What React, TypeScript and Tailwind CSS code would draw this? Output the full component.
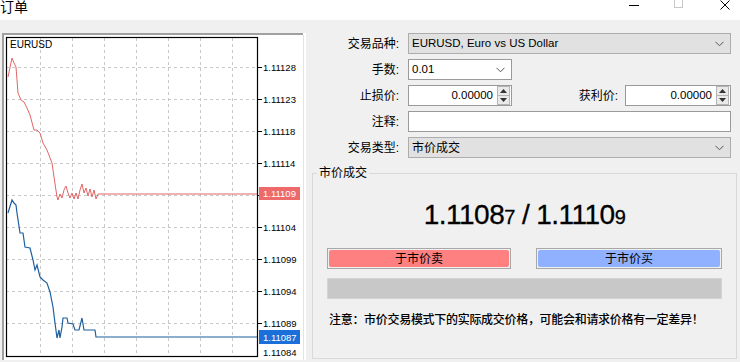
import React from 'react';

const gridX = [40, 72, 104, 136, 168, 200, 232];
const gridY = [67, 99, 131, 163, 195, 227, 259, 291, 323];
const axisLabels: Array<[number, string]> = [
  [67, '1.11128'],
  [99, '1.11123'],
  [131, '1.11118'],
  [163, '1.11114'],
  [227, '1.11104'],
  [259, '1.11099'],
  [291, '1.11094'],
  [323, '1.11089'],
  [352, '1.11084'],
];

// ask line
const redPts = [
  [8, 77], [12, 58], [14, 63], [16, 67], [18, 93], [21, 100], [24, 102], [27, 108], [30, 115],
  [34, 130], [37, 130], [40, 133], [43, 143], [47, 150], [52, 163], [54, 177], [57, 197],
  [58, 200], [60, 194], [62, 198], [64, 190], [66, 186], [68, 193], [70, 198], [72, 193],
  [74, 199], [76, 193], [78, 199], [80, 190], [82, 184], [84, 193], [86, 188], [88, 196],
  [90, 189], [92, 197], [94, 190], [96, 199], [98, 194], [258, 194],
];

// bid line
const bluePts = [
  [8, 213], [12, 200], [14, 203], [16, 205], [17, 213], [20, 233], [23, 233], [25, 247],
  [30, 248], [33, 260], [35, 270], [37, 265], [40, 277], [43, 280], [47, 283], [50, 292],
  [53, 307], [55, 323], [57, 338], [59, 330], [60, 338], [62, 327], [63, 318], [67, 318],
  [68, 323], [73, 324], [75, 330], [79, 330], [82, 318], [84, 330], [95, 330], [96, 337],
  [258, 337],
];

const toPoints = (pts: number[][]) => pts.map(p => `${p[0]},${p[1]}`).join(' ');

function Chart() {
  return (
    <svg width={304} height={327} viewBox="2 33 304 327" className="block shrink-0">
      <rect x={2} y={33} width={304} height={327} fill="#ffffff" />
      <line x1={2} y1={34} x2={303} y2={34} stroke="#a0a0a0" strokeWidth={2} />
      <line x1={3} y1={33} x2={3} y2={360} stroke="#a0a0a0" strokeWidth={2} />
      <line x1={303.5} y1={35} x2={303.5} y2={360} stroke="#e3e3e3" />
      {gridX.map(x => (
        <line key={x} x1={x + 0.5} y1={38} x2={x + 0.5} y2={356} stroke="#c8c8c8" strokeDasharray="3 3" />
      ))}
      {gridY.map(y => (
        <line key={y} x1={6} y1={y + 0.5} x2={257} y2={y + 0.5} stroke="#c8c8c8" strokeDasharray="3 3" />
      ))}
      <polyline points={toPoints(redPts)} fill="none" stroke="#e06666" strokeWidth={1} />
      <polyline points={toPoints(bluePts)} fill="none" stroke="#1f5f9e" strokeWidth={1.2} />
      <rect x={6.5} y={37.5} width={251} height={319} fill="none" stroke="#000000" strokeWidth={1.2} />
      {gridY.map(y => (
        <line key={y} x1={258} y1={y + 0.5} x2={262} y2={y + 0.5} stroke="#000000" />
      ))}
      <text x={10} y={48} fontSize={10} fontFamily="'Liberation Sans', sans-serif" fill="#000">EURUSD</text>
      {axisLabels.map(([y, t]) => (
        <text key={t} x={263} y={y + 3.5} fontSize={9.5} fontFamily="'Liberation Sans', sans-serif" fill="#000">
          {t}
        </text>
      ))}
      <rect x={259} y={187} width={41} height={13} fill="#ee6a6a" />
      <text x={263} y={197} fontSize={9.5} fontFamily="'Liberation Sans', sans-serif" fill="#fff">1.11109</text>
      <rect x={259} y={330} width={41} height={14} fill="#1a6fd8" />
      <text x={263} y={340.5} fontSize={9.5} fontFamily="'Liberation Sans', sans-serif" fill="#fff">1.11087</text>
    </svg>
  );
}

function Chevron() {
  return (
    <svg width="9" height="6" viewBox="0 0 9 6" className="shrink-0">
      <polyline points="0.5,0.8 4.5,4.8 8.5,0.8" fill="none" stroke="#555" strokeWidth="1" />
    </svg>
  );
}

function Spinner() {
  return (
    <div className="flex flex-col w-[13px] h-[19px] border border-[#b5b5b5] bg-[#e9e9e9] shrink-0">
      <div className="flex-1 flex items-center justify-center border-b border-[#b5b5b5]">
        <svg width="7" height="4" viewBox="0 0 7 4"><polygon points="0,4 3.5,0 7,4" fill="#333" /></svg>
      </div>
      <div className="flex-1 flex items-center justify-center">
        <svg width="7" height="4" viewBox="0 0 7 4"><polygon points="0,0 3.5,4 7,0" fill="#333" /></svg>
      </div>
    </div>
  );
}

function Label({ children }: { children: React.ReactNode }) {
  return <div className="w-[90px] pr-[1px] text-right shrink-0">{children}</div>;
}

export default function App() {
  return (
    <div
      className="w-[740px] h-[362px] overflow-hidden bg-[#f0f0f0] text-[12px] text-black flex flex-col"
      style={{ fontFamily: "'Liberation Sans', 'Noto Sans CJK SC', sans-serif" }}
    >
      {/* title bar */}
      <div className="h-[20px] bg-white flex items-start justify-between shrink-0">
        <div className="-mt-[2px] text-[14px] leading-[18px]">订单</div>
        <div className="flex items-start h-[20px] pr-[10px]">
          <div className="w-[10px] h-[1px] mt-[5px] bg-black" />
          <div className="ml-[35px] w-[9px] h-[9px] -mt-[1px] border border-[#c8c8c8]" />
          <svg width="10" height="10" viewBox="0 0 10 10" className="ml-[37px]">
            <path d="M0.5 0.5 L9.5 9.5 M9.5 0.5 L0.5 9.5" stroke="#000" strokeWidth="1" />
          </svg>
        </div>
      </div>

      <div className="flex pl-[2px] pt-[13px] gap-[4px]">
        <Chart />

        <div className="flex-1 flex flex-col">
          <div className="flex flex-col gap-[5px]">
            <div className="flex items-center h-[21px] gap-[8px]">
              <Label>交易品种:</Label>
              <div className="w-[323px] h-[21px] bg-[#e1e1e1] border border-[#adadad] flex items-center justify-between pl-[3px] pr-[6px]">
                <span className="text-[11.5px]">EURUSD, Euro vs US Dollar</span>
                <Chevron />
              </div>
            </div>
            <div className="flex items-center h-[21px] gap-[8px]">
              <Label>手数:</Label>
              <div className="w-[104px] h-[21px] bg-white border border-[#9a9a9a] flex items-center justify-between pl-[3px] pr-[6px]">
                <span className="text-[11.5px]">0.01</span>
                <Chevron />
              </div>
            </div>
            <div className="flex items-center h-[21px] gap-[8px]">
              <Label>止损价:</Label>
              <div className="w-[104px] h-[21px] bg-white border border-[#9a9a9a] flex items-center justify-end pr-[1px] gap-[4px]">
                <span className="text-[11.5px]">0.00000</span>
                <Spinner />
              </div>
              <div className="w-[98px] text-right shrink-0">获利价:</div>
              <div className="-ml-[1px] w-[106px] h-[21px] bg-white border border-[#9a9a9a] flex items-center justify-end pr-[1px] gap-[4px]">
                <span className="text-[11.5px]">0.00000</span>
                <Spinner />
              </div>
            </div>
            <div className="flex items-center h-[21px] gap-[8px]">
              <Label>注释:</Label>
              <div className="w-[323px] h-[21px] bg-white border border-[#9a9a9a]" />
            </div>
            <div className="flex items-center h-[21px] gap-[8px]">
              <Label>交易类型:</Label>
              <div className="w-[323px] h-[21px] bg-[#e1e1e1] border border-[#adadad] flex items-center justify-between pl-[3px] pr-[6px]">
                <span>市价成交</span>
                <Chevron />
              </div>
            </div>
          </div>

          <fieldset className="mt-[8px] ml-[2px] w-[425px] h-[193px] border border-[#d9d9d9] flex flex-col">
            <legend className="ml-[4px] px-[2px] text-[12px] leading-[14px]">市价成交</legend>
            <div className="flex justify-center items-baseline mt-[20px] h-[30px] text-[28px] leading-[30px] tracking-[-0.5px] [-webkit-text-stroke:0.3px_#000]">
              <span>1.1108</span>
              <span className="text-[20px]">7</span>
              <span className="mx-[7px]">/</span>
              <span>1.1110</span>
              <span className="text-[20px]">9</span>
            </div>
            <div className="flex justify-between px-[14px] mt-[18px]">
              <div className="w-[184px] h-[21px] border border-[#a8a8a8] p-[1px]">
                <div className="h-full bg-[#ff8080] rounded-[2px] flex items-center justify-center text-[12px]">于市价卖</div>
              </div>
              <div className="w-[186px] h-[21px] border border-[#a8a8a8] p-[1px]">
                <div className="h-full bg-[#8fb1ff] rounded-[2px] flex items-center justify-center text-[12px]">于市价买</div>
              </div>
            </div>
            <div className="mx-[14px] mt-[9px] h-[21px] bg-[#c8c8c8] border border-[#d4d4d4]" />
            <div className="ml-[16px] mt-[12px] text-[12px] font-medium tracking-[-0.3px]">
              注意：市价交易模式下的实际成交价格，可能会和请求价格有一定差异！
            </div>
          </fieldset>
        </div>
      </div>
    </div>
  );
}
